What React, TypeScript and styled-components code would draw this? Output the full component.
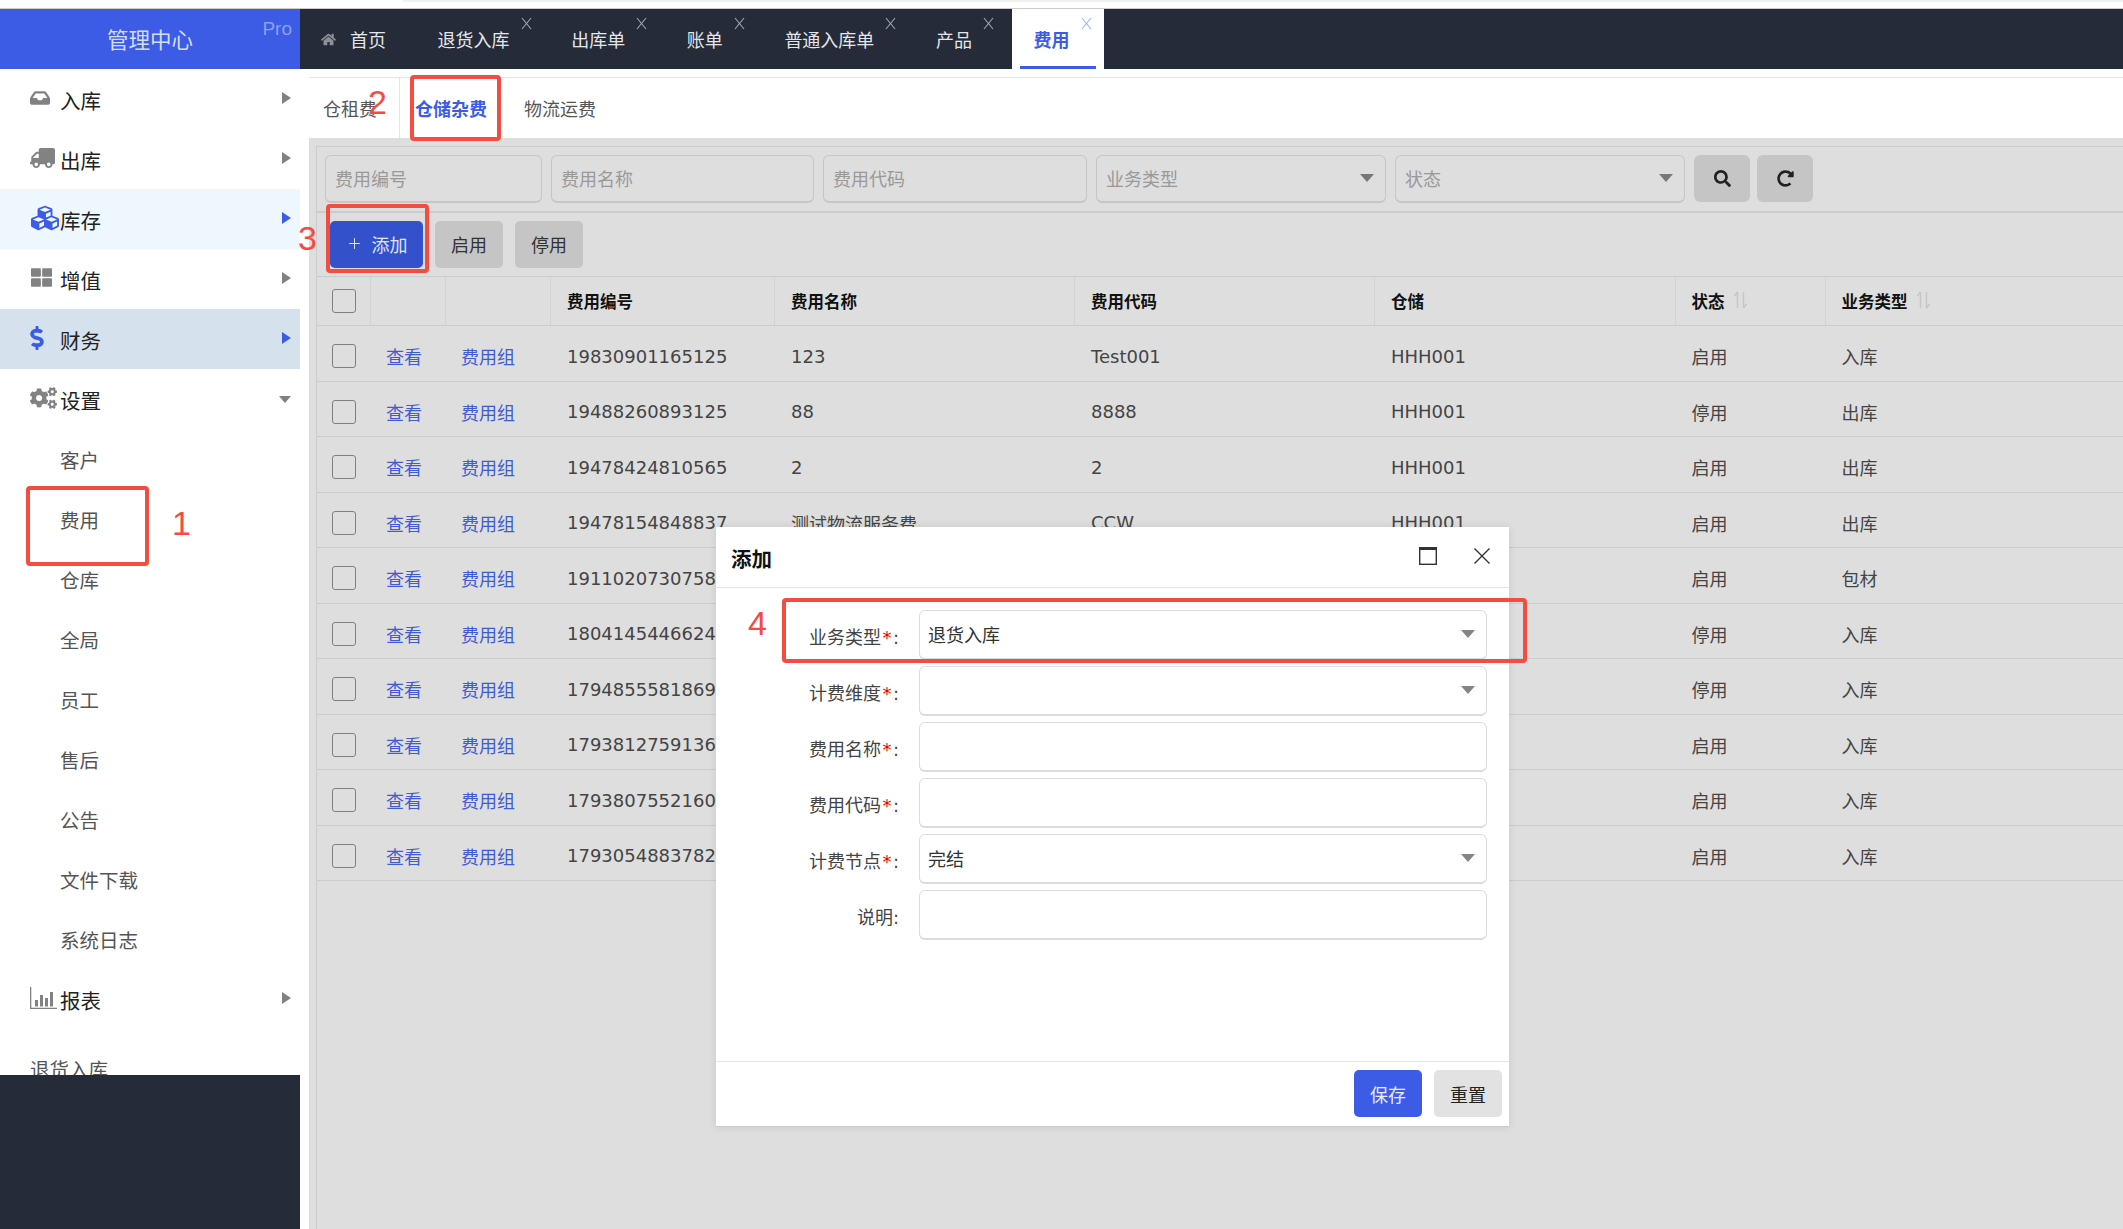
import styled, { createGlobalStyle } from "styled-components";
import { FaCogs, FaCubes, FaDollarSign, FaHome, FaInbox, FaRedoAlt, FaSearch, FaThLarge, FaTruck } from "react-icons/fa";
import { Plus } from "lucide-react";
import type { ReactNode } from "react";

const BLUE = "#3c5ce6";
const DARK = "#252b38";
const MASK = "#dedede";
const LINE = "#cccccc";
const RED = "#f44c41";

const GlobalStyle = createGlobalStyle`
  html, body {
    margin: 0;
    padding: 0;
    background: #fff;
  }
  body {
    font-family: "DejaVu Sans", "Noto Sans CJK SC", sans-serif;
    font-size: 18px;
    color: #333;
  }
  * {
    box-sizing: border-box;
  }
`;

const Page = styled.div`
  position: relative;
  width: 2123px;
  height: 1229px;
  overflow: hidden;
  display: flex;
  flex-direction: column;
  background: #fff;
`;

const TopStrip = styled.div`
  height: 9px;
  flex: none;
  border-bottom: 1px solid ${LINE};
  &::before {
    content: "";
    display: block;
    height: 2px;
    margin-left: 403px;
    background: #f0f0f2;
  }
`;

const NavBar = styled.header`
  display: flex;
  height: 60px;
  flex: none;
  background: ${DARK};
`;

const Logo = styled.div`
  position: relative;
  width: 300px;
  flex: none;
  display: flex;
  align-items: center;
  justify-content: center;
  padding-bottom: 2px;
  background: ${BLUE};
  color: #d3dcfa;
  font-size: 21.5px;
`;

const Pro = styled.span`
  position: absolute;
  top: 9px;
  right: 8px;
  font-family: "Liberation Sans", sans-serif;
  font-size: 19px;
  color: #8a9ff0;
`;

const TabList = styled.nav`
  display: flex;
  gap: 5.6px;
`;

const Tab = styled.div<{ $active?: boolean; $home?: boolean }>`
  position: relative;
  display: flex;
  align-items: center;
  gap: 14px;
  padding: ${(p) => (p.$home ? "0 24px 0 21px" : "0 34px 0 22px")};
  background: ${(p) => (p.$active ? "#fff" : "transparent")};
  color: ${(p) => (p.$active ? BLUE : "#e4e6ea")};
  font-weight: ${(p) => (p.$active ? 700 : 400)};
  font-size: 18px;
  &::after {
    content: "";
    display: ${(p) => (p.$active ? "block" : "none")};
    position: absolute;
    left: 8px;
    right: 8px;
    bottom: 0;
    height: 3px;
    background: ${BLUE};
  }
`;

const HomeIcon = styled(FaHome)`
  font-size: 15px;
  color: #8d9098;
`;

const TabClose = styled.svg<{ $active?: boolean }>`
  position: absolute;
  top: 8px;
  right: 11px;
  width: 13px;
  height: 13px;
  stroke: ${(p) => (p.$active ? "#9db0f2" : "#a5a8ae")};
  stroke-width: 1.1;
  fill: none;
`;

const Body = styled.div`
  flex: 1;
  display: flex;
  min-height: 0;
`;

const Sidebar = styled.aside`
  width: 300px;
  flex: none;
  display: flex;
  flex-direction: column;
  background: ${DARK};
`;

const Menu = styled.ul`
  list-style: none;
  margin: 0;
  padding: 0;
  height: 1006px;
  flex: none;
  overflow: hidden;
  background: #fff;
`;

const MenuItem = styled.li<{ $bg?: string; $active?: boolean }>`
  height: 60px;
  display: flex;
  align-items: center;
  padding: 0 9px 0 30px;
  background: ${(p) => p.$bg || "transparent"};
  color: ${(p) => (p.$active ? BLUE : "#828282")};
`;

const MenuLabel = styled.span`
  padding-top: 2px;
  color: #222;
  font-size: 20.5px;
`;

const IconSlot = styled.span<{ $w: number; $h: number; $flip?: boolean }>`
  width: 30px;
  flex: none;
  display: flex;
  align-items: center;
  margin-top: -3px;
  svg {
    width: ${(p) => p.$w}px;
    height: ${(p) => p.$h}px;
    transform: ${(p) => (p.$flip ? "scaleX(-1)" : "none")};
  }
`;

const SubItem = styled.li`
  height: 60px;
  display: flex;
  align-items: center;
  padding-left: 60px;
  color: #555;
  font-size: 19.5px;
`;

const ShortcutItem = styled.li`
  height: 60px;
  margin-top: 9px;
  display: flex;
  align-items: center;
  padding-left: 30px;
  color: #555;
  font-size: 19.5px;
`;

const CaretRight = styled.i<{ $active?: boolean }>`
  margin: -3px 0 0 auto;
  width: 0;
  height: 0;
  border-style: solid;
  border-width: 6.5px 0 6.5px 9px;
  border-color: transparent transparent transparent ${(p) => (p.$active ? BLUE : "#808080")};
`;

const CaretDown = styled.i<{ $color?: string; $w?: number; $h?: number; $push?: boolean }>`
  width: 0;
  height: 0;
  flex: none;
  margin-left: ${(p) => (p.$push ? "auto" : "0")};
  border-style: solid;
  border-width: ${(p) => `${p.$h ?? 8}px ${(p.$w ?? 14) / 2}px 0 ${(p.$w ?? 14) / 2}px`};
  border-color: ${(p) => p.$color ?? "#777"} transparent transparent transparent;
`;

const Main = styled.main`
  flex: 1;
  min-width: 0;
  margin-left: 9px;
  padding-top: 8px;
  display: flex;
  flex-direction: column;
`;

const SubTabs = styled.div`
  height: 61px;
  flex: none;
  display: flex;
  border-top: 1px solid #e6e6e6;
`;

const SubTab = styled.div<{ $active?: boolean; $divider?: boolean }>`
  display: flex;
  align-items: center;
  padding: 0 22px 0 15px;
  border-right: ${(p) => (p.$divider ? "1px solid #e6e6e6" : "none")};
  color: ${(p) => (p.$active ? BLUE : "#555")};
  font-weight: ${(p) => (p.$active ? 700 : 400)};
  &:first-child {
    padding-left: 14px;
  }
`;

const Masked = styled.section`
  flex: 1;
  min-height: 0;
  padding: 8px 0 0 7px;
  background: ${MASK};
`;

const Panel = styled.div`
  height: 100%;
  border-left: 1px solid ${LINE};
  border-top: 1px solid ${LINE};
`;

const FilterBar = styled.div`
  height: 66px;
  display: flex;
  align-items: flex-start;
  gap: 9px;
  padding: 8px 0 0 8px;
  border-bottom: 2px solid ${LINE};
`;

const FilterField = styled.div<{ $w: number }>`
  width: ${(p) => p.$w}px;
  height: 48px;
  flex: none;
  display: flex;
  align-items: center;
  justify-content: space-between;
  padding: 0 11px 2px 9px;
  border: 1px solid #c6c6c6;
  border-bottom-width: 2px;
  border-radius: 6px;
  color: #999;
`;

const IconButton = styled.button`
  width: 56px;
  height: 47px;
  flex: none;
  margin-right: -2px;
  padding: 0;
  display: flex;
  align-items: center;
  justify-content: center;
  border: none;
  border-radius: 6px;
  background: #c5c5c5;
  color: #222;
  font-size: 17px;
`;

const Toolbar = styled.div`
  height: 64px;
  display: flex;
  align-items: flex-start;
  gap: 12px;
  padding: 8px 0 0 13px;
  border-bottom: 1px solid ${LINE};
`;

const ActionButton = styled.button<{ $primary?: boolean }>`
  height: 47px;
  width: ${(p) => (p.$primary ? "93px" : "68px")};
  padding: 0 0 2px;
  display: flex;
  align-items: center;
  justify-content: center;
  gap: 9px;
  border: none;
  border-radius: 5px;
  background: ${(p) => (p.$primary ? "#3351cb" : "#c5c5c5")};
  color: ${(p) => (p.$primary ? "#dfe5fa" : "#333")};
  font-family: inherit;
  font-size: 18px;
`;

const COLUMNS = "54px 75px 105px 224px 300px 300px 300.6px 150px 1fr";

const HeadRow = styled.div`
  display: grid;
  grid-template-columns: ${COLUMNS};
  height: 49px;
  border-bottom: 1px solid ${LINE};
`;

const HeadCell = styled.div`
  display: flex;
  align-items: center;
  gap: 8px;
  padding-left: 16px;
  border-right: 1px solid #d2d2d2;
  color: #111;
  font-size: 16.5px;
  font-weight: 700;
  &:first-child {
    padding-left: 15px;
  }
  &:last-child {
    border-right: none;
  }
`;

const Row = styled.div`
  display: grid;
  grid-template-columns: ${COLUMNS};
  height: 55.5px;
  border-bottom: 1px solid ${LINE};
`;

const Cell = styled.div`
  display: flex;
  align-items: center;
  padding: 5.5px 0 0 16px;
  white-space: nowrap;
  overflow: hidden;
  color: #444;
  &:first-child {
    padding: 6px 0 0 15px;
  }
`;

const LinkCell = styled(Cell)`
  padding-left: 15px;
  color: #3f5bd6;
`;

const CheckBox = styled.span`
  width: 24px;
  height: 24px;
  border: 1px solid #808080;
  border-radius: 3px;
`;

const SortIcon = styled.svg`
  width: 15px;
  height: 20px;
  margin-top: -2px;
  stroke: #c6c6c6;
  stroke-width: 1.4;
  fill: none;
`;

const Dialog = styled.div`
  position: absolute;
  left: 716px;
  top: 527px;
  width: 793px;
  height: 600px;
  display: flex;
  flex-direction: column;
  background: #fff;
  border-bottom: 1px solid #cacaca;
  box-shadow: 0 0 8px rgba(0, 0, 0, 0.1);
`;

const DialogHead = styled.div`
  height: 61px;
  flex: none;
  display: flex;
  align-items: center;
  padding: 0 18px 0 15px;
  border-bottom: 1px solid #e6e6e6;
  color: #111;
  font-size: 20.5px;
  font-weight: 700;
`;

const DialogTitle = styled.span`
  margin-right: auto;
  padding-top: 1px;
`;

const DialogIcon = styled.svg`
  width: 18px;
  height: 18px;
  margin-top: -3px;
  fill: none;
  stroke: #333;
  stroke-width: 1.4;
  & + & {
    margin-left: 36px;
  }
`;

const DialogBody = styled.div`
  flex: 1;
  display: flex;
  flex-direction: column;
  gap: 6.5px;
  padding: 22px 22px 0 0;
`;

const FormRow = styled.div`
  display: flex;
  justify-content: flex-end;
  gap: 20px;
`;

const FormLabel = styled.label`
  padding-top: 15px;
  color: #444;
  line-height: 26px;
`;

const Required = styled.span`
  padding: 0 1.5px;
  color: #f00000;
`;

const FormControl = styled.div`
  width: 568px;
  height: 49.5px;
  display: flex;
  align-items: center;
  justify-content: space-between;
  padding: 0 11px 1px 8px;
  border: 1px solid #dcdcdc;
  border-bottom-width: 2px;
  border-radius: 6px;
  color: #333;
`;

const DialogFoot = styled.div`
  height: 65px;
  flex: none;
  display: flex;
  justify-content: flex-end;
  gap: 12px;
  padding: 8px 7px 0 0;
  border-top: 1px solid #e6e6e6;
`;

const FootButton = styled.button<{ $primary?: boolean }>`
  width: 68px;
  height: 47px;
  padding: 0;
  border: none;
  border-radius: 5px;
  background: ${(p) => (p.$primary ? BLUE : "#e2e2e2")};
  color: ${(p) => (p.$primary ? "#e8ecfd" : "#222")};
  font-family: inherit;
  font-size: 18px;
`;

const MarkBox = styled.div<{ $x: number; $y: number; $w: number; $h: number }>`
  position: absolute;
  left: ${(p) => p.$x}px;
  top: ${(p) => p.$y}px;
  width: ${(p) => p.$w}px;
  height: ${(p) => p.$h}px;
  border: 4px solid ${RED};
  border-radius: 4px;
`;

const MarkNumber = styled.span<{ $x: number; $y: number }>`
  position: absolute;
  left: ${(p) => p.$x}px;
  top: ${(p) => p.$y}px;
  color: ${RED};
  font-family: "Liberation Sans", sans-serif;
  font-size: 34px;
  line-height: 34px;
`;

type FeeRow = {
  no: string;
  name?: string;
  code?: string;
  warehouse?: string;
  status: string;
  kind: string;
};

const tabs = ["退货入库", "出库单", "账单", "普通入库单", "产品"];

const rows: FeeRow[] = [
  { no: "19830901165125", name: "123", code: "Test001", warehouse: "HHH001", status: "启用", kind: "入库" },
  { no: "19488260893125", name: "88", code: "8888", warehouse: "HHH001", status: "停用", kind: "出库" },
  { no: "19478424810565", name: "2", code: "2", warehouse: "HHH001", status: "启用", kind: "出库" },
  { no: "19478154848837", name: "测试物流服务费", code: "CCW", warehouse: "HHH001", status: "启用", kind: "出库" },
  { no: "19110207307583", status: "启用", kind: "包材" },
  { no: "18041454466245", status: "停用", kind: "入库" },
  { no: "17948555818691", status: "停用", kind: "入库" },
  { no: "17938127591360", status: "启用", kind: "入库" },
  { no: "17938075521608", status: "启用", kind: "入库" },
  { no: "17930548837825", status: "启用", kind: "入库" },
];

const subMenu = ["客户", "费用", "仓库", "全局", "员工", "售后", "公告", "文件下载", "系统日志"];

const CloseGlyph = () => (
  <>
    <path d="M2 1 L11 12" />
    <path d="M11 1 L2 12" />
  </>
);

const Sort = () => (
  <SortIcon viewBox="0 0 15 20">
    <path d="M4.5 18 V2 M1.5 6 L4.5 2" />
    <path d="M10.5 2 V18 M13.5 14 L10.5 18" />
  </SortIcon>
);

// axis and bars, thinner than the icon-pack chart
const ChartGlyph = () => (
  <svg viewBox="0 0 27 22" fill="currentColor">
    <path d="M0 0 H1.3 V20.7 H27 V22 H0 Z" />
    <rect x="5" y="13" width="3" height="6.5" />
    <rect x="10" y="8" width="3" height="11.5" />
    <rect x="15" y="11" width="3" height="8.5" />
    <rect x="20" y="5" width="3" height="14.5" />
  </svg>
);

const Field = ({ label, required, value, select }: { label: string; required?: boolean; value?: string; select?: boolean }) => (
  <FormRow>
    <FormLabel>
      {label}
      {required && <Required>*</Required>}:
    </FormLabel>
    <FormControl>
      <span>{value}</span>
      {select && <CaretDown $color="#858585" />}
    </FormControl>
  </FormRow>
);

const NavItem = ({ icon, label, bg, active, open }: { icon: ReactNode; label: string; bg?: string; active?: boolean; open?: boolean }) => (
  <MenuItem $bg={bg} $active={active}>
    {icon}
    <MenuLabel>{label}</MenuLabel>
    {open ? <CaretDown $color="#808080" $w={13} $h={7} $push /> : <CaretRight $active={active} />}
  </MenuItem>
);

function App() {
  return (
    <Page>
      <GlobalStyle />
      <TopStrip />
      <NavBar>
        <Logo>
          管理中心
          <Pro>Pro</Pro>
        </Logo>
        <TabList>
          <Tab $home>
            <HomeIcon />
            首页
          </Tab>
          {tabs.map((t) => (
            <Tab key={t}>
              {t}
              <TabClose viewBox="0 0 13 13">
                <CloseGlyph />
              </TabClose>
            </Tab>
          ))}
          <Tab $active>
            费用
            <TabClose $active viewBox="0 0 13 13">
              <CloseGlyph />
            </TabClose>
          </Tab>
        </TabList>
      </NavBar>
      <Body>
        <Sidebar>
          <Menu>
            <NavItem icon={<IconSlot $w={20} $h={18}><FaInbox /></IconSlot>} label="入库" />
            <NavItem icon={<IconSlot $w={25} $h={20} $flip><FaTruck /></IconSlot>} label="出库" />
            <NavItem icon={<IconSlot $w={30} $h={28}><FaCubes /></IconSlot>} label="库存" bg="#eef6fe" active />
            <NavItem icon={<IconSlot $w={23} $h={21}><FaThLarge /></IconSlot>} label="增值" />
            <NavItem icon={<IconSlot $w={14} $h={24}><FaDollarSign /></IconSlot>} label="财务" bg="#d5e1ec" active />
            <NavItem icon={<IconSlot $w={27} $h={24}><FaCogs /></IconSlot>} label="设置" open />
            {subMenu.map((s) => (
              <SubItem key={s}>{s}</SubItem>
            ))}
            <NavItem icon={<IconSlot $w={27} $h={22}><ChartGlyph /></IconSlot>} label="报表" />
            <ShortcutItem>退货入库</ShortcutItem>
          </Menu>
        </Sidebar>
        <Main>
          <SubTabs>
            <SubTab $divider>仓租费</SubTab>
            <SubTab $active>仓储杂费</SubTab>
            <SubTab>物流运费</SubTab>
          </SubTabs>
          <Masked>
            <Panel>
              <FilterBar>
                <FilterField $w={217}>费用编号</FilterField>
                <FilterField $w={263}>费用名称</FilterField>
                <FilterField $w={264}>费用代码</FilterField>
                <FilterField $w={290}>
                  业务类型
                  <CaretDown />
                </FilterField>
                <FilterField $w={290}>
                  状态
                  <CaretDown />
                </FilterField>
                <IconButton>
                  <FaSearch />
                </IconButton>
                <IconButton>
                  <FaRedoAlt />
                </IconButton>
              </FilterBar>
              <Toolbar>
                <ActionButton $primary>
                  <Plus size={17} strokeWidth={1.4} />
                  添加
                </ActionButton>
                <ActionButton>启用</ActionButton>
                <ActionButton>停用</ActionButton>
              </Toolbar>
              <HeadRow>
                <HeadCell>
                  <CheckBox />
                </HeadCell>
                <HeadCell />
                <HeadCell />
                <HeadCell>费用编号</HeadCell>
                <HeadCell>费用名称</HeadCell>
                <HeadCell>费用代码</HeadCell>
                <HeadCell>仓储</HeadCell>
                <HeadCell>
                  状态
                  <Sort />
                </HeadCell>
                <HeadCell>
                  业务类型
                  <Sort />
                </HeadCell>
              </HeadRow>
              {rows.map((r) => (
                <Row key={r.no}>
                  <Cell>
                    <CheckBox />
                  </Cell>
                  <LinkCell>查看</LinkCell>
                  <LinkCell>费用组</LinkCell>
                  <Cell>{r.no}</Cell>
                  <Cell>{r.name}</Cell>
                  <Cell>{r.code}</Cell>
                  <Cell>{r.warehouse}</Cell>
                  <Cell>{r.status}</Cell>
                  <Cell>{r.kind}</Cell>
                </Row>
              ))}
            </Panel>
          </Masked>
        </Main>
      </Body>

      <Dialog>
        <DialogHead>
          <DialogTitle>添加</DialogTitle>
          <DialogIcon viewBox="0 0 18 18">
            <rect x="0.7" y="0.7" width="16.6" height="16.6" />
            <path d="M0.7 2 H17.3" strokeWidth="2" />
          </DialogIcon>
          <DialogIcon viewBox="0 0 18 18">
            <path d="M1.5 1.5 L16.5 16.5 M16.5 1.5 L1.5 16.5" />
          </DialogIcon>
        </DialogHead>
        <DialogBody>
          <Field label="业务类型" required value="退货入库" select />
          <Field label="计费维度" required select />
          <Field label="费用名称" required />
          <Field label="费用代码" required />
          <Field label="计费节点" required value="完结" select />
          <Field label="说明" />
        </DialogBody>
        <DialogFoot>
          <FootButton $primary>保存</FootButton>
          <FootButton>重置</FootButton>
        </DialogFoot>
      </Dialog>

      <MarkBox $x={26} $y={486} $w={123} $h={80} />
      <MarkNumber $x={172} $y={506}>1</MarkNumber>
      <MarkBox $x={410} $y={75} $w={91} $h={66} />
      <MarkNumber $x={368} $y={85}>2</MarkNumber>
      <MarkBox $x={326} $y={204} $w={103} $h={69} />
      <MarkNumber $x={298} $y={221}>3</MarkNumber>
      <MarkBox $x={782} $y={598} $w={745} $h={65} />
      <MarkNumber $x={748} $y={606}>4</MarkNumber>
    </Page>
  );
}

export default App;
